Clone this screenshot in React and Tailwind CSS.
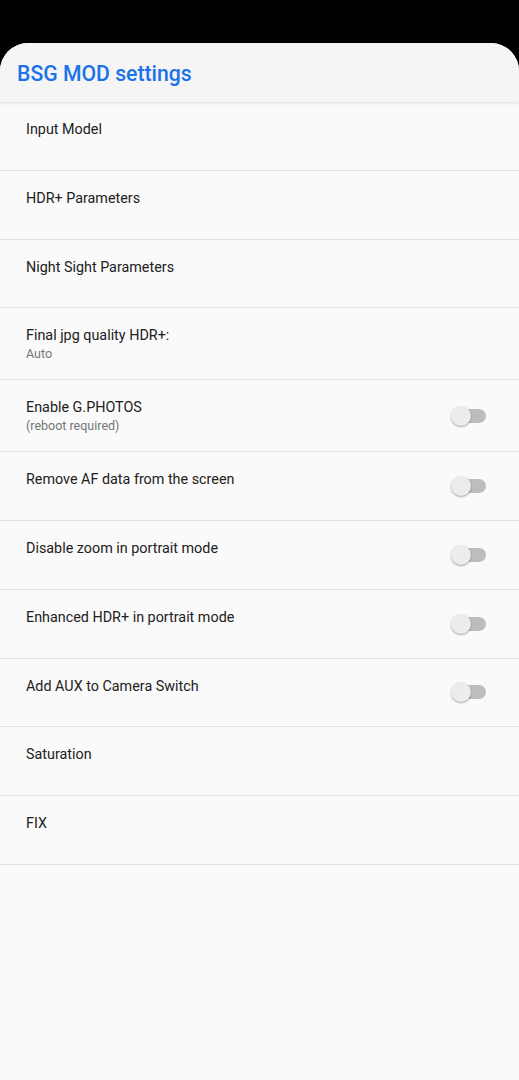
const rows = [
  { title: "Input Model" },
  { title: "HDR+ Parameters" },
  { title: "Night Sight Parameters" },
  { title: "Final jpg quality HDR+:", sub: "Auto" },
  { title: "Enable G.PHOTOS", sub: "(reboot required)", toggle: true },
  { title: "Remove AF data from the screen", toggle: true },
  { title: "Disable zoom in portrait mode", toggle: true },
  { title: "Enhanced HDR+ in portrait mode", toggle: true },
  { title: "Add AUX to Camera Switch", toggle: true },
  { title: "Saturation" },
  { title: "FIX" },
];

const Toggle = () => (
  <div className="relative h-5 w-9 flex items-center">
    <div className="absolute left-[3px] h-[14px] w-[32px] rounded-full bg-[#bdbdbd]" />
    <div className="absolute left-0 h-5 w-5 rounded-full bg-[#ececec] shadow-[0_1px_2px_rgba(0,0,0,0.35)]" />
  </div>
);

export default function App() {
  return (
    <div
      className="min-h-[1080px] bg-black pt-[43px]"
      style={{ fontFamily: "Roboto, 'Noto Sans', sans-serif" }}
    >
      <div className="min-h-[1037px] rounded-t-[28px] bg-[#fafafa] overflow-hidden">
        <div className="relative z-10 flex h-[59px] items-center bg-[#f5f5f5] px-[17px] pt-[2px] shadow-[0_1px_3px_rgba(0,0,0,0.12)]">
          <h1 className="text-[21.2px] font-medium text-[#1a73e8]">BSG MOD settings</h1>
        </div>
        <div>
          {rows.map((r) => (
            <div
              key={r.title}
              className="flex min-h-[68.75px] items-center justify-between border-b border-[#e0e0e0] pl-[26px] pr-8"
            >
              <div className="self-start pt-[18px] pb-[18px]">
                <div className="text-[14.35px] leading-5 text-[#212121]">{r.title}</div>
                {r.sub && (
                  <div className="text-[12.5px] leading-[15px] text-[#757575]">{r.sub}</div>
                )}
              </div>
              {r.toggle && <Toggle />}
            </div>
          ))}
        </div>
      </div>
    </div>
  );
}
